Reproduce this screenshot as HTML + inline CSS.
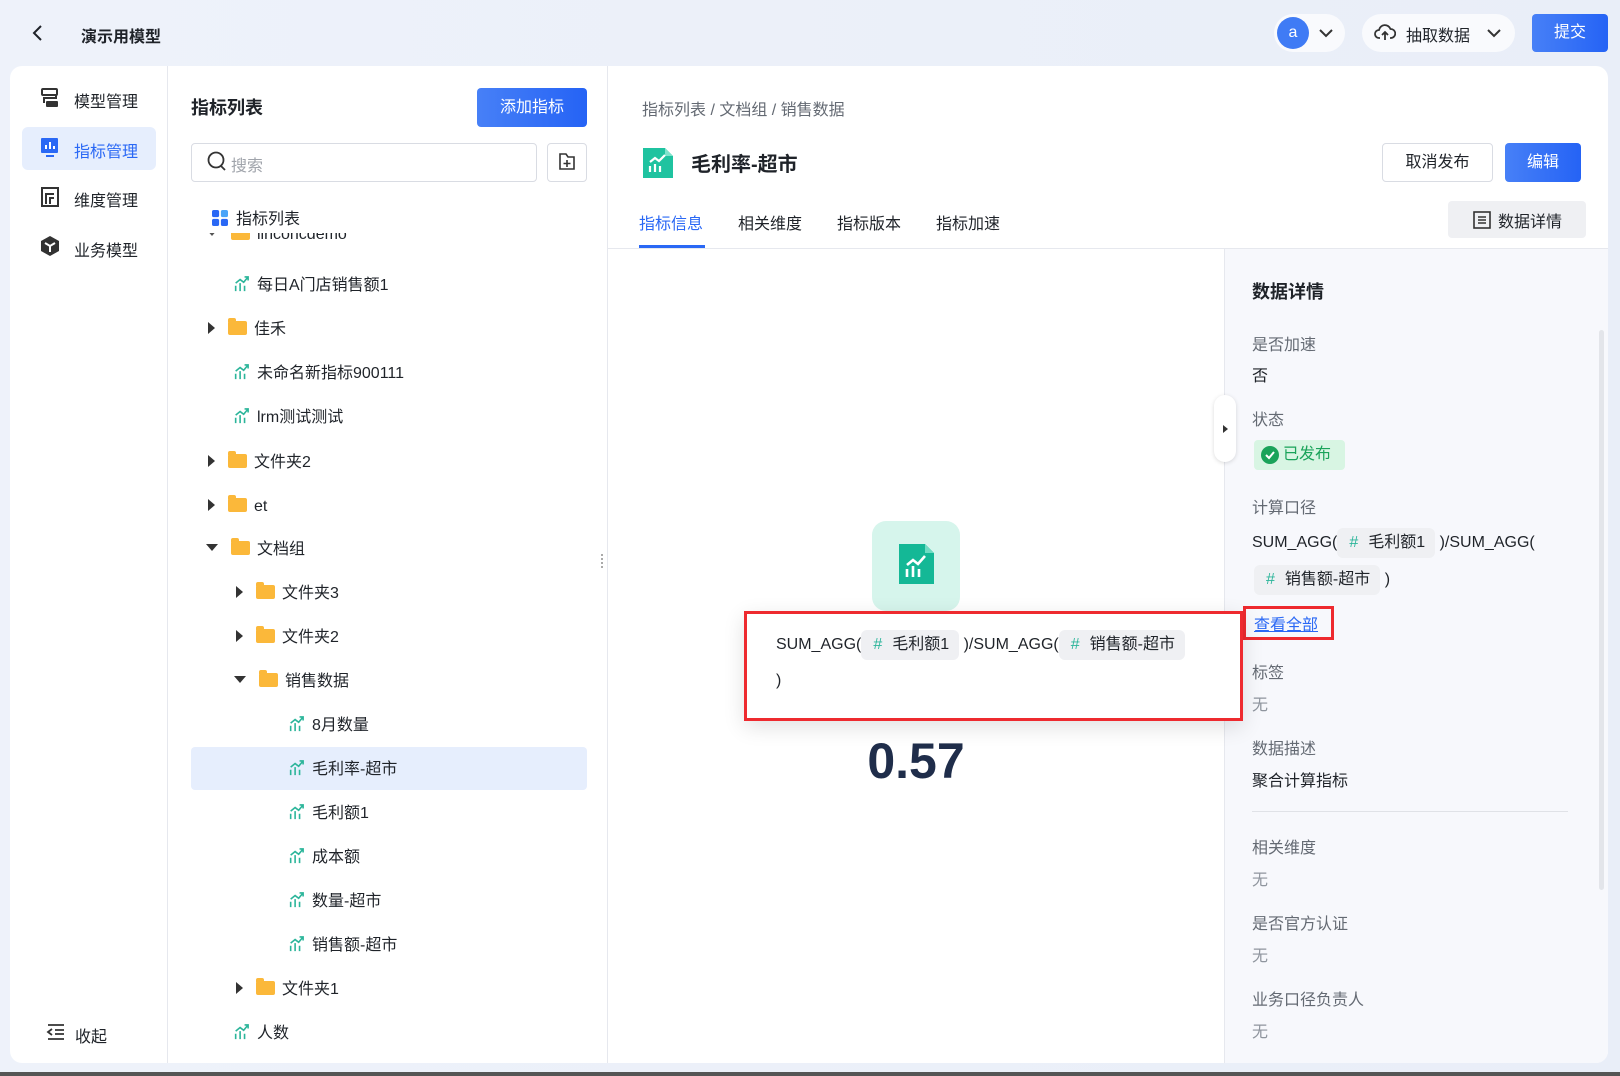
<!DOCTYPE html>
<html><head><meta charset="utf-8"><style>
*{box-sizing:border-box;margin:0;padding:0}
body{width:1620px;height:1076px;overflow:hidden;background:linear-gradient(90deg,#eef2fa,#e9eef8);font-family:"Liberation Sans","Noto Sans CJK SC",sans-serif;color:#1f2329;position:relative}
.a{position:absolute}
.t{font-size:16px;white-space:nowrap}
.card{left:10px;top:66px;width:1598px;height:997px;background:#fff;border-radius:12px;overflow:hidden}
.nav{left:0;top:0;width:158px;height:997px;border-right:1px solid #e6e8ee}
.tree .row{position:absolute;font-size:16px;color:#1f2329;white-space:nowrap;line-height:20px}
.folder{display:inline-block;width:19px;height:14px;background:#fbb83a;border-radius:2px;vertical-align:-1px;margin-right:7px;position:relative}
.folder:before{content:"";position:absolute;left:0;top:-3px;width:8px;height:4px;background:#fbb83a;border-radius:2px 2px 0 0}
.tri{display:inline-block;width:0;height:0;border-top:6px solid transparent;border-bottom:6px solid transparent;border-left:7px solid #333;margin-right:13px;vertical-align:0}
.tri.d{border-left:6px solid transparent;border-right:6px solid transparent;border-top:7px solid #333;border-bottom:0;vertical-align:3px}
.mi{display:inline-block;width:18px;height:16px;vertical-align:-2px;margin-right:7px}
.lbl{font-size:16px;color:#646a73;white-space:nowrap}
.val{font-size:16px;color:#1f2329;white-space:nowrap}
.none{font-size:16px;color:#8f959e}
.chip{display:inline-block;background:#eff0f3;border-radius:6px;padding:5px 10px 5px 12px;color:#1f2329;line-height:20px}
.chip b{color:#2bb59a;font-weight:normal;margin-right:10px}
</style></head><body>
<svg class="a" style="left:31px;top:24px" width="14" height="18"><path d="M10 2L3 9l7 7" stroke="#1f2329" stroke-width="2" fill="none"/></svg>
<div class="a t" style="left:81px;top:23px;font-weight:bold;font-size:16px">演示用模型</div>
<div class="a" style="left:1274px;top:14px;width:71px;height:38px;border-radius:19px;background:rgba(255,255,255,.7)"></div>
<div class="a" style="left:1277px;top:17px;width:32px;height:32px;border-radius:50%;background:#3f7bf5;color:#fff;text-align:center;line-height:32px;font-size:16px">a</div>
<svg class="a" style="left:1318px;top:26px" width="16" height="14"><path d="M2 4l6 6 6-6" stroke="#333" stroke-width="2" fill="none"/></svg>
<div class="a" style="left:1362px;top:14px;width:153px;height:38px;border-radius:19px;background:rgba(255,255,255,.7)"></div>
<svg class="a" style="left:1374px;top:22px" width="22" height="22"><path d="M6 16H5a4 4 0 010-8 6 6 0 0111.5-1A4.5 4.5 0 0117 16h-1M11 18v-8M8 13l3-3 3 3" stroke="#333" stroke-width="1.8" fill="none"/></svg>
<div class="a t" style="left:1406px;top:22px">抽取数据</div>
<svg class="a" style="left:1486px;top:26px" width="16" height="14"><path d="M2 4l6 6 6-6" stroke="#333" stroke-width="2" fill="none"/></svg>
<div class="a" style="left:1532px;top:14px;width:76px;height:38px;border-radius:4px;background:linear-gradient(90deg,#4780f7,#2563f5);color:#fff;font-size:16px;text-align:center;line-height:38px">提交</div>

<div class="a card">
 <div class="a nav">
  <div class="a" style="left:12px;top:61px;width:134px;height:43px;background:#e6eefd;border-radius:6px"></div>
  <svg class="a" style="left:30px;top:21px" width="20" height="22"><rect x="2" y="2" width="15" height="6" rx="1" fill="none" stroke="#333" stroke-width="2"/><rect x="6" y="14" width="12" height="6" rx="1" fill="#333"/><path d="M16 8v3H4v5" stroke="#333" stroke-width="2" fill="none"/></svg>
  <div class="a t" style="left:64px;top:22px">模型管理</div>
  <svg class="a" style="left:30px;top:71px" width="20" height="22"><rect x="1" y="1" width="17" height="15" rx="1" fill="#2a68f5"/><path d="M6 12V8M10 12V5M14 12V9" stroke="#fff" stroke-width="2"/><path d="M6 19h8" stroke="#2a68f5" stroke-width="2"/></svg>
  <div class="a t" style="left:64px;top:72px;color:#2a68f5">指标管理</div>
  <svg class="a" style="left:30px;top:120px" width="20" height="22"><rect x="2" y="2" width="16" height="18" fill="none" stroke="#333" stroke-width="2"/><path d="M6 18V8h8M10 18v-6h4" stroke="#333" stroke-width="2" fill="none"/></svg>
  <div class="a t" style="left:64px;top:121px">维度管理</div>
  <svg class="a" style="left:30px;top:169px" width="20" height="22"><path d="M10 1l9 5v10l-9 5-9-5V6z" fill="#333"/><path d="M5 8l5 3 5-3M10 11v6" stroke="#fff" stroke-width="2" fill="none"/></svg>
  <div class="a t" style="left:64px;top:171px">业务模型</div>
  <svg class="a" style="left:36px;top:957px" width="20" height="18"><path d="M2 2h16M9 7h9M9 11h9M2 16h16M6 6l-4 3 4 3" stroke="#333" stroke-width="1.8" fill="none"/></svg>
  <div class="a t" style="left:65px;top:957px">收起</div>
 </div>
 <div class="a tree" style="left:158px;top:0;width:440px;height:997px;border-right:1px solid #e6e8ee">
  <div class="a" style="left:23px;top:28px;font-size:18px;font-weight:bold">指标列表</div>
  <div class="a" style="left:309px;top:22px;width:110px;height:39px;border-radius:4px;background:linear-gradient(90deg,#4780f7,#2563f5);color:#fff;font-size:16px;text-align:center;line-height:39px">添加指标</div>
  <div class="a" style="left:23px;top:77px;width:346px;height:39px;border:1px solid #d9dce3;border-radius:4px"></div>
  <svg class="a" style="left:38px;top:84px" width="22" height="24"><circle cx="10" cy="10" r="7.5" fill="none" stroke="#333" stroke-width="1.8"/><path d="M15 16l4 4" stroke="#333" stroke-width="1.8"/></svg>
  <div class="a t" style="left:63px;top:86px;color:#a0a4ab">搜索</div>
  <div class="a" style="left:379px;top:77px;width:40px;height:39px;border:1px solid #d9dce3;border-radius:4px"></div>
  <svg class="a" style="left:390px;top:86px" width="18" height="20"><path d="M2 2h6l2 3h6v12H2z" fill="none" stroke="#333" stroke-width="1.6"/><path d="M9 8v7M5.5 11.5h7" stroke="#333" stroke-width="1.6"/></svg>
  <div class="row" style="left:43px;top:144px"><svg class="mi" viewBox="0 0 18 18"><rect x="0" y="0" width="8" height="8" rx="2" fill="#2a68f5"/><rect x="10" y="0" width="8" height="8" rx="2" fill="#4aa4f8"/><rect x="0" y="10" width="8" height="8" rx="2" fill="#2a68f5"/><rect x="10" y="10" width="8" height="8" rx="2" fill="#2a68f5"/></svg>指标列表</div>
  <div class="a" style="left:0;top:167px;width:440px;height:12px;overflow:hidden"><div class="row" style="left:38px;top:-8px"><span class="tri d" style="border-top-color:#555"></span><span class="folder"></span>linconcdemo</div></div>
  <div class="a" style="left:23px;top:681px;width:396px;height:43px;background:#e6eefd;border-radius:4px"></div>
 </div>
 <div class="a t" style="left:632px;top:30px;color:#646a73">指标列表 / 文档组 / 销售数据</div>
 <svg class="a" style="left:630px;top:79px" width="36" height="36"><path d="M3 3h22l8 8v22H3z" fill="#1fc3a0"/><path d="M25 3v8h8" fill="#7de3cc"/><path d="M10 27v-6M15 27v-8M20 27v-6M10 17l5-4 4 3 6-6" stroke="#fff" stroke-width="2.2" fill="none"/></svg>
 <div class="a" style="left:681px;top:82px;font-size:20px;font-weight:bold">毛利率-超市</div>
 <div class="a" style="left:1372px;top:77px;width:111px;height:39px;border:1px solid #d9dce3;border-radius:4px;text-align:center;line-height:37px;font-size:16px">取消发布</div>
 <div class="a" style="left:1495px;top:77px;width:76px;height:39px;border-radius:4px;background:linear-gradient(90deg,#4780f7,#2563f5);color:#fff;text-align:center;line-height:39px;font-size:16px">编辑</div>
 <div class="a t" style="left:629px;top:144px;color:#2a68f5">指标信息</div>
 <div class="a" style="left:629px;top:179px;width:66px;height:3px;background:#2a68f5"></div>
 <div class="a t" style="left:728px;top:144px">相关维度</div>
 <div class="a t" style="left:827px;top:144px">指标版本</div>
 <div class="a t" style="left:926px;top:144px">指标加速</div>
 <div class="a" style="left:1438px;top:135px;width:138px;height:37px;background:#eff0f3;border-radius:4px"></div>
 <svg class="a" style="left:1462px;top:144px" width="20" height="20"><rect x="2" y="2" width="16" height="16" fill="none" stroke="#333" stroke-width="1.6"/><path d="M6 7h8M6 10h8M6 13h8" stroke="#333" stroke-width="1.4"/></svg>
 <div class="a t" style="left:1488px;top:142px">数据详情</div>
 <div class="a" style="left:598px;top:182px;width:1000px;height:1px;background:#e6e8ee"></div>
 <div class="a" style="left:1214px;top:183px;width:384px;height:814px;background:#f7f8fc;border-left:1px solid #e6e8ee"></div>
 <div class="a" style="left:1589px;top:264px;width:5px;height:560px;background:#e3e5ea;border-radius:3px"></div>
 <div class="a" style="left:1204px;top:329px;width:22px;height:67px;background:#fff;border-radius:11px;box-shadow:0 1px 4px rgba(0,0,0,.15)"></div>
 <div class="a" style="left:1213px;top:359px;border-top:4px solid transparent;border-bottom:4px solid transparent;border-left:5px solid #333"></div>
 <div class="a" style="left:1242px;top:212px;font-size:18px;font-weight:bold">数据详情</div>
 <div class="a lbl" style="left:1242px;top:265px">是否加速</div>
 <div class="a val" style="left:1242px;top:296px">否</div>
 <div class="a lbl" style="left:1242px;top:340px">状态</div>
 <div class="a" style="left:1244px;top:374px;width:91px;height:30px;background:#d8f5e3;border-radius:4px"></div>
 <svg class="a" style="left:1251px;top:380px" width="18" height="18"><circle cx="9" cy="9" r="9" fill="#1aa35a"/><path d="M5 9l3 3 5-6" stroke="#fff" stroke-width="2" fill="none"/></svg>
 <div class="a t" style="left:1273px;top:379px;color:#1aa35a;line-height:20px">已发布</div>
 <div class="a lbl" style="left:1242px;top:428px">计算口径</div>
 <div class="a val" style="left:1242px;top:462px">SUM_AGG(<span class="chip"><b>#</b>毛利额1</span> )/SUM_AGG(</div>
 <div class="a val" style="left:1244px;top:499px"><span class="chip"><b>#</b>销售额-超市</span> )</div>
 <div class="a" style="left:1233px;top:540px;width:91px;height:34px;border:3px solid #ee2a2f"></div>
 <div class="a t" style="left:1244px;top:545px;color:#2a68f5;text-decoration:underline">查看全部</div>
 <div class="a lbl" style="left:1242px;top:593px">标签</div>
 <div class="a none" style="left:1242px;top:625px">无</div>
 <div class="a lbl" style="left:1242px;top:669px">数据描述</div>
 <div class="a val" style="left:1242px;top:701px">聚合计算指标</div>
 <div class="a" style="left:1242px;top:745px;width:316px;height:1px;background:#e0e2e7"></div>
 <div class="a lbl" style="left:1242px;top:768px">相关维度</div>
 <div class="a none" style="left:1242px;top:800px">无</div>
 <div class="a lbl" style="left:1242px;top:844px">是否官方认证</div>
 <div class="a none" style="left:1242px;top:876px">无</div>
 <div class="a lbl" style="left:1242px;top:920px">业务口径负责人</div>
 <div class="a none" style="left:1242px;top:952px">无</div>
 <div class="a" style="left:862px;top:455px;width:88px;height:90px;background:#d6f5ec;border-radius:14px"></div>
 <svg class="a" style="left:886px;top:475px" width="42" height="46"><path d="M3 3h26l9 9v31H3z" fill="#14b896"/><path d="M29 3v9h9" fill="#6fdcc3"/><path d="M11 36v-8M17 36v-11M23 36v-8M11 24l6-5 5 4 7-8" stroke="#fff" stroke-width="2.6" fill="none"/></svg>
 <div class="a" style="left:734px;top:545px;width:499px;height:110px;border:3px solid #ee2a2f;background:#fff;box-shadow:0 6px 20px rgba(0,0,0,.12)"></div>
 <div class="a val" style="left:766px;top:561px;line-height:36px">SUM_AGG(<span class="chip"><b>#</b>毛利额1</span> )/SUM_AGG(<span class="chip"><b>#</b>销售额-超市</span><br>)</div>
 <div class="a" style="left:836px;top:666px;width:140px;text-align:center;font-size:50px;font-weight:bold;color:#1f2d4a">0.57</div>
 <div class="a" style="left:591px;top:488px;width:2px;height:14px;border-left:2px dotted #aaa"></div>
</div>
<div class="a tree" style="left:0;top:3px">
 <div class="row" style="left:232px;top:273px"><svg class="mi" viewBox="0 0 18 18"><path d="M3 17v-6M8 17V8M13 17v-6M3 8l5-4 4 3 5-6M13 1h4v4" stroke="#2bb59a" stroke-width="1.8" fill="none"/></svg>每日A门店销售额1</div>
 <div class="row" style="left:208px;top:317px"><span class="tri"></span><span class="folder"></span>佳禾</div>
 <div class="row" style="left:232px;top:361px"><svg class="mi" viewBox="0 0 18 18"><path d="M3 17v-6M8 17V8M13 17v-6M3 8l5-4 4 3 5-6M13 1h4v4" stroke="#2bb59a" stroke-width="1.8" fill="none"/></svg>未命名新指标900111</div>
 <div class="row" style="left:232px;top:405px"><svg class="mi" viewBox="0 0 18 18"><path d="M3 17v-6M8 17V8M13 17v-6M3 8l5-4 4 3 5-6M13 1h4v4" stroke="#2bb59a" stroke-width="1.8" fill="none"/></svg>lrm测试测试</div>
 <div class="row" style="left:208px;top:450px"><span class="tri"></span><span class="folder"></span>文件夹2</div>
 <div class="row" style="left:208px;top:494px"><span class="tri"></span><span class="folder"></span>et</div>
 <div class="row" style="left:206px;top:537px"><span class="tri d"></span><span class="folder"></span>文档组</div>
 <div class="row" style="left:236px;top:581px"><span class="tri"></span><span class="folder"></span>文件夹3</div>
 <div class="row" style="left:236px;top:625px"><span class="tri"></span><span class="folder"></span>文件夹2</div>
 <div class="row" style="left:234px;top:669px"><span class="tri d"></span><span class="folder"></span>销售数据</div>
 <div class="row" style="left:287px;top:713px"><svg class="mi" viewBox="0 0 18 18"><path d="M3 17v-6M8 17V8M13 17v-6M3 8l5-4 4 3 5-6M13 1h4v4" stroke="#2bb59a" stroke-width="1.8" fill="none"/></svg>8月数量</div>
 <div class="row" style="left:287px;top:757px"><svg class="mi" viewBox="0 0 18 18"><path d="M3 17v-6M8 17V8M13 17v-6M3 8l5-4 4 3 5-6M13 1h4v4" stroke="#2bb59a" stroke-width="1.8" fill="none"/></svg>毛利率-超市</div>
 <div class="row" style="left:287px;top:801px"><svg class="mi" viewBox="0 0 18 18"><path d="M3 17v-6M8 17V8M13 17v-6M3 8l5-4 4 3 5-6M13 1h4v4" stroke="#2bb59a" stroke-width="1.8" fill="none"/></svg>毛利额1</div>
 <div class="row" style="left:287px;top:845px"><svg class="mi" viewBox="0 0 18 18"><path d="M3 17v-6M8 17V8M13 17v-6M3 8l5-4 4 3 5-6M13 1h4v4" stroke="#2bb59a" stroke-width="1.8" fill="none"/></svg>成本额</div>
 <div class="row" style="left:287px;top:889px"><svg class="mi" viewBox="0 0 18 18"><path d="M3 17v-6M8 17V8M13 17v-6M3 8l5-4 4 3 5-6M13 1h4v4" stroke="#2bb59a" stroke-width="1.8" fill="none"/></svg>数量-超市</div>
 <div class="row" style="left:287px;top:933px"><svg class="mi" viewBox="0 0 18 18"><path d="M3 17v-6M8 17V8M13 17v-6M3 8l5-4 4 3 5-6M13 1h4v4" stroke="#2bb59a" stroke-width="1.8" fill="none"/></svg>销售额-超市</div>
 <div class="row" style="left:236px;top:977px"><span class="tri"></span><span class="folder"></span>文件夹1</div>
 <div class="row" style="left:232px;top:1021px"><svg class="mi" viewBox="0 0 18 18"><path d="M3 17v-6M8 17V8M13 17v-6M3 8l5-4 4 3 5-6M13 1h4v4" stroke="#2bb59a" stroke-width="1.8" fill="none"/></svg>人数</div>
</div>
<div class="a" style="left:0;top:1072px;width:1620px;height:4px;background:#555"></div>
</body></html>
